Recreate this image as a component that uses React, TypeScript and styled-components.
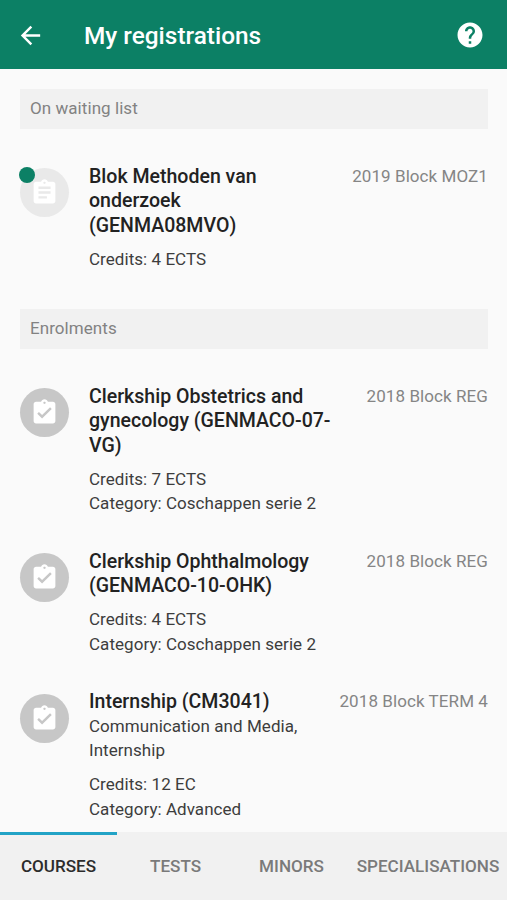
import React from "react";
import styled, { createGlobalStyle } from "styled-components";
import { MdArrowBack, MdAssignment, MdAssignmentTurnedIn, MdHelp } from "react-icons/md";

const GlobalStyle = createGlobalStyle`
  * { box-sizing: border-box; }
  body { margin: 0; background: #fafafa; font-family: Roboto, sans-serif; }
`;

const Screen = styled.div`
  height: 900px;
  max-height: 100vh;
  display: flex;
  flex-direction: column;
  overflow: hidden;
  background: #fafafa;
  color: #3d3d3d;
`;

const AppBar = styled.header`
  flex: none;
  height: 69px;
  display: flex;
  align-items: center;
  padding: 1px 22px 0 16px;
  background: #0c8065;
  color: #fff;
`;

const IconButton = styled.button`
  display: flex;
  padding: 0;
  border: 0;
  background: none;
  color: #fff;
`;

const PageTitle = styled.h1`
  flex: 1;
  margin: 0 0 0 39px;
  padding-top: 1px;
  font-size: 24.4px;
  font-weight: 500;
  line-height: 30px;
`;

const Content = styled.main`
  flex: 1;
  min-height: 0;
  overflow: hidden;
  padding: 20.4px 19px 0 20px;
`;

const Section = styled.section`
  margin-bottom: 21.3px;
`;

const SectionHeading = styled.h2`
  margin: 0 0 18.5px;
  height: 39.5px;
  padding: 0 10px;
  background: #f1f1f1;
  color: #828282;
  font-size: 17px;
  font-weight: 400;
  line-height: 38px;
  letter-spacing: 0.06px;
`;

const Item = styled.article`
  display: flex;
  padding: 16.5px 0;
  font-size: 17px;
  line-height: 24.45px;
`;

const Avatar = styled.div<{ $pending?: boolean }>`
  position: relative;
  flex: none;
  display: flex;
  align-items: center;
  justify-content: center;
  width: 49px;
  height: 49px;
  margin: 4.4px 20px 0 0;
  border-radius: 50%;
  background: ${(p) => (p.$pending ? "#e9e9e9" : "#c7c7c7")};
  color: #fff;
`;

const NewDot = styled.span`
  position: absolute;
  top: -1.5px;
  left: -1px;
  width: 16px;
  height: 16px;
  border-radius: 50%;
  background: #0c8065;
`;

const Details = styled.div`
  flex: 1;
  min-width: 0;
`;

const Name = styled.h3`
  margin: 1px 0 -1px;
  max-width: 242.4px;
  color: #222;
  font-size: 19.55px;
  font-weight: 500;
  line-height: inherit;
`;

const Line = styled.div`
  max-width: 242.4px;
  letter-spacing: 0.05px;
`;

const Meta = styled.div`
  margin-top: 9.7px;
`;

const Period = styled.div`
  flex: none;
  color: #858585;
  letter-spacing: 0.08px;
`;

const TabBar = styled.nav`
  flex: none;
  height: 68.5px;
  display: grid;
  grid-template-columns: 117px 117px 115px 158px;
  background: #f1f1f1;
`;

const Tab = styled.button<{ $active?: boolean }>`
  padding: 0 0 2px;
  border: 0;
  border-top: 3px solid ${(p) => (p.$active ? "#22a3c6" : "transparent")};
  background: none;
  color: ${(p) => (p.$active ? "#2c2c2c" : "#7a7a7a")};
  font: 500 17.1px/24px Roboto, sans-serif;
  white-space: nowrap;
`;

type Registration = {
  name: string;
  note?: string;
  period: string;
  meta: string[];
  pending?: boolean;
};

const waiting: Registration[] = [
  { name: "Blok Methoden van onderzoek (GENMA08MVO)", period: "2019 Block MOZ1", meta: ["Credits: 4 ECTS"], pending: true },
];

const enrolments: Registration[] = [
  { name: "Clerkship Obstetrics and gynecology (GENMACO-07-VG)", period: "2018 Block REG", meta: ["Credits: 7 ECTS", "Category: Coschappen serie 2"] },
  { name: "Clerkship Ophthalmology (GENMACO-10-OHK)", period: "2018 Block REG", meta: ["Credits: 4 ECTS", "Category: Coschappen serie 2"] },
  { name: "Internship (CM3041)", note: "Communication and Media, Internship", period: "2018 Block TERM 4", meta: ["Credits: 12 EC", "Category: Advanced"] },
];

const tabs = ["COURSES", "TESTS", "MINORS", "SPECIALISATIONS"];

function RegistrationItem({ name, note, period, meta, pending }: Registration) {
  return (
    <Item>
      <Avatar $pending={pending}>
        {pending ? <MdAssignment size={29} /> : <MdAssignmentTurnedIn size={29} />}
        {pending && <NewDot />}
      </Avatar>
      <Details>
        <Name>{name}</Name>
        {note && <Line>{note}</Line>}
        <Meta>
          {meta.map((text) => (
            <Line key={text}>{text}</Line>
          ))}
        </Meta>
      </Details>
      <Period>{period}</Period>
    </Item>
  );
}

export default function App() {
  return (
    <Screen>
      <GlobalStyle />
      <AppBar>
        <IconButton aria-label="Back">
          <MdArrowBack size={29} />
        </IconButton>
        <PageTitle>My registrations</PageTitle>
        <IconButton aria-label="Help">
          <MdHelp size={30} />
        </IconButton>
      </AppBar>
      <Content>
        <Section>
          <SectionHeading>On waiting list</SectionHeading>
          {waiting.map((item) => (
            <RegistrationItem key={item.name} {...item} />
          ))}
        </Section>
        <Section>
          <SectionHeading>Enrolments</SectionHeading>
          {enrolments.map((item) => (
            <RegistrationItem key={item.name} {...item} />
          ))}
        </Section>
      </Content>
      <TabBar>
        {tabs.map((label, i) => (
          <Tab key={label} $active={i === 0}>
            {label}
          </Tab>
        ))}
      </TabBar>
    </Screen>
  );
}
